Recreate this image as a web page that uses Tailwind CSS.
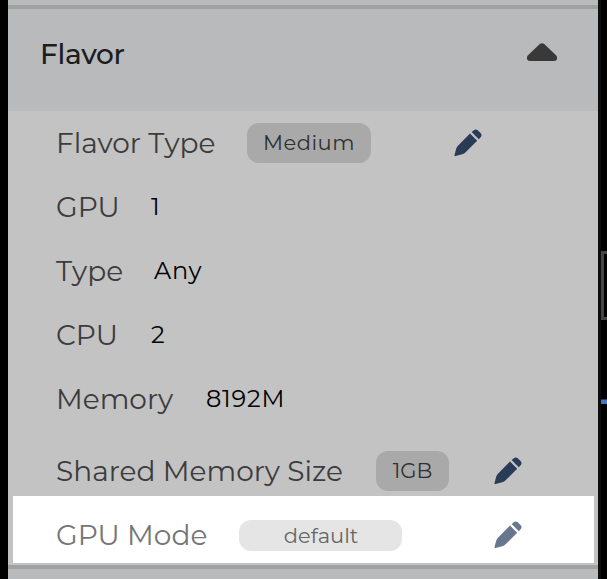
<!DOCTYPE html>
<html lang="en">
<head>
<meta charset="utf-8">
<title>Flavor</title>
<script src="https://cdn.jsdelivr.net/npm/@tailwindcss/browser@4"></script>
</head>
<body class="bg-black">
<svg class="hidden">
  <symbol id="pencil" viewBox="0 0 28 28"><path d="M16 4.6 23.2 11.8 11.6 23.3Q10.2 24.8 8.2 25.3L1.6 27.1Q.3 27.4.5 26L2.2 19.8Q2.7 17.9 4.2 16.4ZM17.6 3.1 19.6 1.4Q21.8-.5 24 1.5L26.5 4Q28.5 6.2 26.6 8.3L24.8 10.3Z"/></symbol>
</svg>
<div class="flex h-[579px] w-[607px] overflow-hidden bg-black pl-2 font-[Montserrat,Inter,sans-serif] whitespace-nowrap">
  <main class="relative flex w-[590px] flex-col bg-[#c3c3c3]">
    <div class="h-[9px] border-b-4 border-[#a0a1a1] bg-[#b9babc]"></div>
    <header class="flex h-[102px] items-start justify-between bg-[#b9babc] pt-[25px] pr-[41px] pl-8">
      <h1 class="text-[28px] leading-10 font-medium tracking-[-0.3px] text-[#1c1c1c]">Flavor</h1>
      <svg class="mt-[9px] h-[18px] w-[30px] fill-[#393939]" viewBox="0 0 30 18"><path d="M12.5 1.2Q15-.9 17.5 1.2L29 12.3Q31 14.6 29.6 16.7 28.8 18 27 18H3Q1.2 18 .4 16.7-1 14.6 1 12.3Z"/></svg>
    </header>
    <div class="absolute top-[496px] left-[5px] h-[67px] w-[581px] bg-white"></div>
    <section class="relative flex flex-col pl-12 text-[28px] font-normal text-[#3c3c3c]">
      <div class="flex h-16 items-center">
        <span class="w-[191px]">Flavor Type</span>
        <span class="flex h-10 w-[124px] items-center justify-center rounded-xl bg-[#a9a9a9] text-[21px] tracking-[0.5px] text-[#303030]">Medium</span>
        <svg class="ml-[83px] size-7 fill-[#293b55]"><use href="#pencil"/></svg>
      </div>
      <div class="flex h-16 items-center"><span class="w-[95px]">GPU</span><span class="text-[24px] text-black">1</span></div>
      <div class="flex h-16 items-center"><span class="w-[98px]">Type</span><span class="text-[24px] tracking-[0.8px] text-black">Any</span></div>
      <div class="flex h-16 items-center"><span class="w-[95px]">CPU</span><span class="text-[24px] text-black">2</span></div>
      <div class="flex h-16 items-center"><span class="w-[150px]">Memory</span><span class="text-[24px] tracking-[0.8px] text-black">8192M</span></div>
      <div class="mt-2 flex h-16 items-center">
        <span class="w-[320px]">Shared Memory Size</span>
        <span class="flex h-10 w-[73px] items-center justify-center rounded-xl bg-[#a9a9a9] text-[21px] text-[#303030]">1GB</span>
        <svg class="ml-[45px] size-7 fill-[#293b55]"><use href="#pencil"/></svg>
      </div>
      <div class="flex h-16 items-center text-[#767676]">
        <span class="w-[183px]">GPU Mode</span>
        <span class="flex h-[31px] w-[163px] items-center justify-center rounded-xl bg-[#e5e5e5] pt-px pl-px text-[21px] text-[#666]">default</span>
        <svg class="ml-[92px] size-7 fill-[#66778f]"><use href="#pencil"/></svg>
      </div>
    </section>
    <footer class="absolute inset-x-0 bottom-0 h-[14px] border-t-4 border-[#a0a1a1] bg-[#b9babc]"></footer>
  </main>
  <aside class="flex w-[9px] flex-col border-l-3 border-[#0d0d0d] pt-[251px]">
    <div class="h-[69px] border-3 border-r-0 border-[#444]"></div>
    <div class="mt-[79px] h-[5px] border-t border-[#263f64] bg-[#4377bf]"></div>
  </aside>
</div>
</body>
</html>
